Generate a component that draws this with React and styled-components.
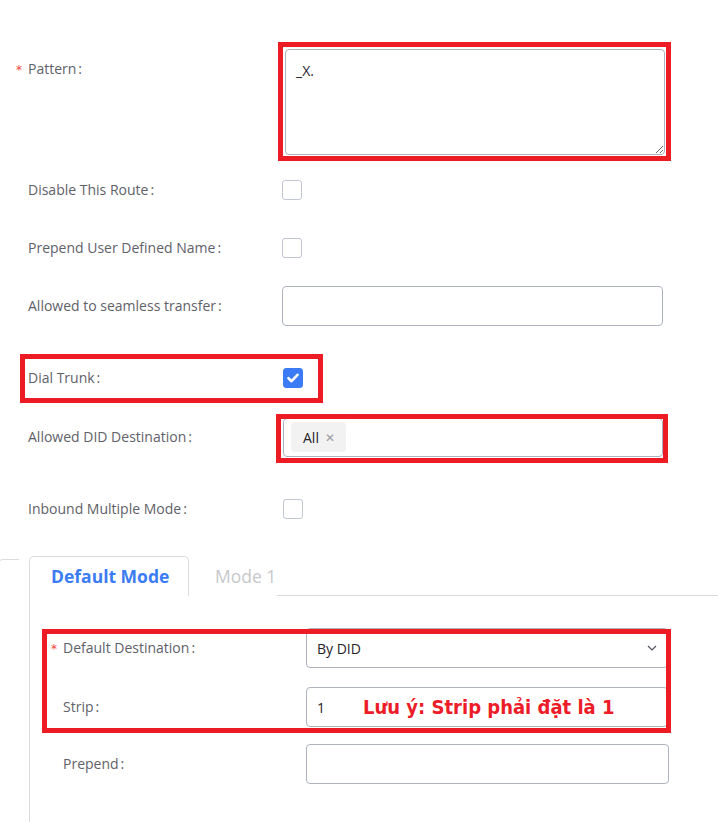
import React from "react";
import styled, { createGlobalStyle, css } from "styled-components";

const GlobalStyle = createGlobalStyle`
  html, body {
    margin: 0;
    background: #fff;
  }
  body {
    font-family: "Open Sans", "Noto Sans", sans-serif;
    overflow: hidden;
  }
`;

// red annotation frame drawn over a part of the form
const frame = css`
  position: relative;
  &::after {
    content: "";
    position: absolute;
    top: ${(p) => p.$t}px;
    right: ${(p) => p.$r}px;
    bottom: ${(p) => p.$b}px;
    left: ${(p) => p.$l}px;
    border: 5px solid #ed1c24;
    pointer-events: none;
  }
`;

const Page = styled.div`
  width: 718px;
  height: 822px;
  overflow: hidden;
`;

const Form = styled.div`
  padding: 49px 0 0 28px;
`;

const Row = styled.div`
  display: flex;
  align-items: ${(p) => (p.$top ? "flex-start" : "center")};
  margin-top: ${(p) => p.$gap || 0}px;
`;

const MarkedRow = styled(Row)`
  width: fit-content;
  ${frame}
`;

const Label = styled.div`
  position: relative;
  flex: none;
  width: ${(p) => p.$w}px;
  line-height: 40px;
  font-size: 14px;
  color: #5f6169;
  white-space: nowrap;
`;

const Star = styled.span`
  position: absolute;
  left: -12px;
  top: 1px;
  color: #f0443a;
  font-family: "DejaVu Sans", sans-serif;
  font-size: 12px;
`;

const Colon = styled.span`
  margin-left: 2px;
`;

const Marked = styled.div`
  width: fit-content;
  ${frame}
`;

const TextArea = styled.textarea`
  display: block;
  box-sizing: border-box;
  width: 380px;
  height: 106px;
  margin: 0 0 0 3px;
  padding: 11px 10px;
  border: 1px solid #aeb3bf;
  border-radius: 4px;
  font-family: "Open Sans", sans-serif;
  font-size: 14px;
  line-height: 20px;
  color: #1f2329;
  outline: none;
`;

const Box = styled.div`
  box-sizing: border-box;
  width: 20px;
  height: 20px;
  margin-left: ${(p) => p.$shift || 0}px;
  border: 1px solid ${(p) => (p.$on ? "#3b7bf5" : "#c3c7d3")};
  border-radius: 3px;
  background: ${(p) => (p.$on ? "#3b7bf5" : "#fff")};
  display: flex;
  align-items: center;
  justify-content: center;
`;

const Field = styled.div`
  position: relative;
  box-sizing: border-box;
  width: ${(p) => p.$w}px;
  height: ${(p) => p.$h || 40}px;
  margin-left: ${(p) => p.$shift || 0}px;
  padding: 0 ${(p) => p.$pad || 10}px;
  border: 1px solid #aeb3bf;
  border-radius: 4px;
  display: flex;
  align-items: center;
  justify-content: space-between;
  font-size: 14px;
  color: #1f2329;
`;

const Tag = styled.span`
  display: inline-flex;
  align-items: center;
  gap: 6px;
  height: 30px;
  padding: 0 11px 0 12px;
  border-radius: 4px;
  background: #f2f2f3;
  font-size: 14px;
  color: #1f2329;
`;

const TagX = styled.span`
  color: #9a9ca3;
  font-size: 12px;
`;

const Tabs = styled.div`
  display: flex;
  align-items: flex-start;
  margin-top: 27px;
`;

const Edge = styled.div`
  flex: none;
  width: 20px;
  height: 10px;
  margin: 3px 0 0 -2px;
  border-top: 1px solid #dcdcdc;
  border-left: 1px solid #dcdcdc;
  border-top-left-radius: 5px;
`;

const Card = styled.div`
  flex: 1;
  margin-left: 10px;
`;

const TabBar = styled.div`
  display: flex;
  height: 39px;
  border-bottom: 1px solid #dcdcdc;
`;

const Tab = styled.div`
  box-sizing: border-box;
  width: ${(p) => (p.$active ? "160px" : "auto")};
  height: 40px;
  padding-left: ${(p) => (p.$active ? 21 : 25)}px;
  border: 1px solid ${(p) => (p.$active ? "#dcdcdc" : "transparent")};
  border-bottom: none;
  border-radius: 5px 5px 0 0;
  background: #fff;
  line-height: 38px;
  font-size: 17.5px;
  font-weight: ${(p) => (p.$active ? 700 : 400)};
  color: ${(p) => (p.$active ? "#3b7cf4" : "#c6c8cc")};
`;

const Panel = styled.div`
  height: 300px;
  padding: 32px 0 0 33px;
  border-left: 1px solid #dcdcdc;
`;

const Group = styled.div`
  width: fit-content;
  ${frame}
`;

const Note = styled.span`
  position: absolute;
  left: 56px;
  top: 50%;
  transform: translateY(-50%);
  white-space: nowrap;
  font-family: "DejaVu Sans Condensed", "DejaVu Sans", sans-serif;
  font-stretch: condensed;
  font-weight: 700;
  font-size: 20px;
  color: #ec1c28;
`;

function Check() {
  return (
    <svg width="12" height="10" viewBox="0 0 12 10">
      <path d="M1.5 5.2 4.6 8.2 10.5 1.8" fill="none" stroke="#fff" strokeWidth="2.6" strokeLinecap="round" strokeLinejoin="round" />
    </svg>
  );
}

function Chevron() {
  return (
    <svg width="10" height="6" viewBox="0 0 10 6">
      <path d="M1 1 5 5 9 1" fill="none" stroke="#4a4d55" strokeWidth="1.1" />
    </svg>
  );
}

function Text({ w, star, children }) {
  return (
    <Label $w={w}>
      {star && <Star>*</Star>}
      {children}
      <Colon>:</Colon>
    </Label>
  );
}

export default function App() {
  return (
    <Page>
      <GlobalStyle />
      <Form>
        <Row $top>
          <Text w={254} star>Pattern</Text>
          <Marked $t={-7} $r={-6} $b={-6} $l={-4}>
            <TextArea defaultValue="_X." readOnly />
          </Marked>
        </Row>
        <Row $gap={15}>
          <Text w={254}>Disable This Route</Text>
          <Box />
        </Row>
        <Row $gap={18}>
          <Text w={254}>Prepend User Defined Name</Text>
          <Box />
        </Row>
        <Row $gap={18}>
          <Text w={254}>Allowed to seamless transfer</Text>
          <Field $w={381} />
        </Row>
        <MarkedRow $gap={32} $t={-4} $r={-20} $b={-5} $l={-8}>
          <Text w={254}>Dial Trunk</Text>
          <Box $on $shift={1}>
            <Check />
          </Box>
        </MarkedRow>
        <Row $gap={19}>
          <Text w={254}>Allowed DID Destination</Text>
          <Marked $t={-4} $r={-5} $b={-6} $l={-6}>
            <Field $w={380} $h={39} $shift={1} $pad={7}>
              <Tag>
                All<TagX>✕</TagX>
              </Tag>
            </Field>
          </Marked>
        </Row>
        <Row $gap={32}>
          <Text w={254}>Inbound Multiple Mode</Text>
          <Box $shift={1} />
        </Row>
      </Form>

      <Tabs>
        <Edge />
        <Card>
          <TabBar>
            <Tab $active>Default Mode</Tab>
            <Tab>Mode 1</Tab>
          </TabBar>
          <Panel>
            <Group $t={1} $r={-3} $b={-6} $l={-21}>
              <Row>
                <Text w={243} star>Default Destination</Text>
                <Field $w={362}>
                  By DID
                  <Chevron />
                </Field>
              </Row>
              <Row $gap={19}>
                <Text w={243}>Strip</Text>
                <Field $w={362}>
                  1
                  <Note>Lưu ý: Strip phải đặt là 1</Note>
                </Field>
              </Row>
            </Group>
            <Row $gap={17}>
              <Text w={243}>Prepend</Text>
              <Field $w={363} />
            </Row>
            <Row $gap={24}>
              <Text w={243}>Set Caller ID Info</Text>
            </Row>
          </Panel>
        </Card>
      </Tabs>
    </Page>
  );
}
